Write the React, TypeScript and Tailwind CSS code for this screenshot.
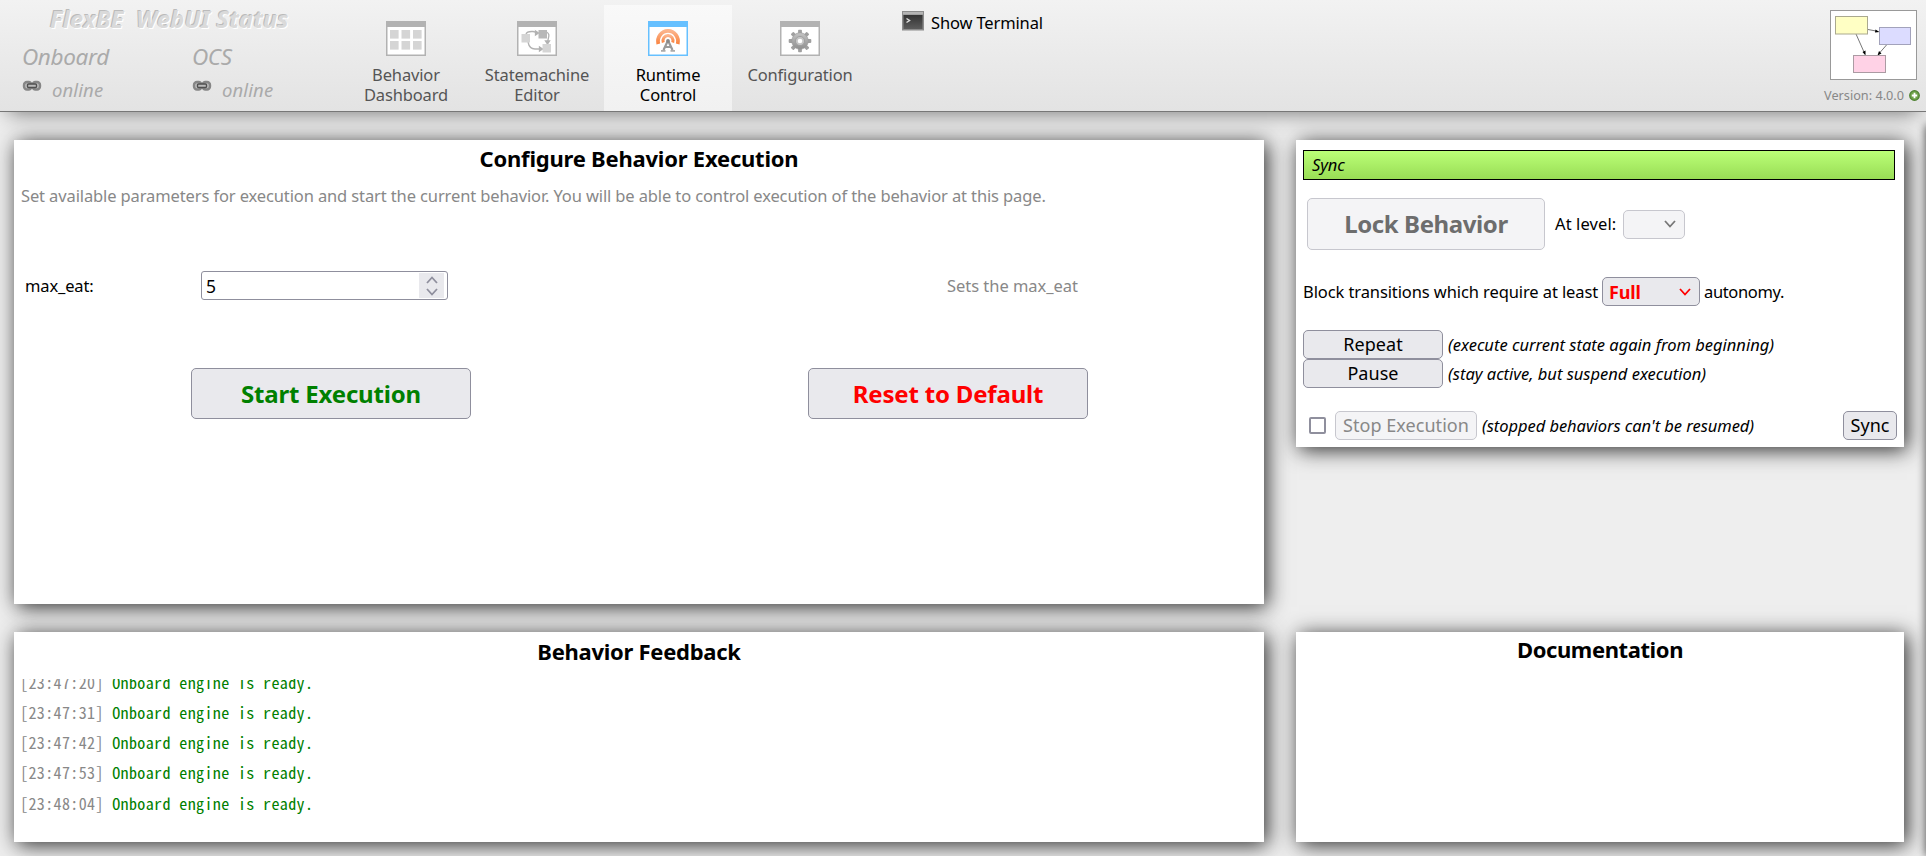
import { ReactNode } from "react";

const TEXT = "font-['Noto_Sans',sans-serif]";

function Chevron({ className = "" }: { className?: string }) {
  return (
    <svg width="12" height="8" viewBox="0 0 12 8" fill="none" stroke="currentColor" strokeWidth="1.8" className={className}>
      <path d="M1 1l5 5.500L11 1" />
    </svg>
  );
}

function WindowIcon({ color, children }: { color: string; children: ReactNode }) {
  return (
    <svg width="40" height="35" viewBox="0 0 40 35">
      <rect x="0.75" y="0.75" width="38.5" height="33.5" fill="#fff" stroke={color} strokeWidth="1.5" />
      <rect width="40" height="6" fill={color} />
      {children}
    </svg>
  );
}

function DashboardIcon() {
  return (
    <WindowIcon color="#b2b2b2">
      {[9, 20].map((y) => [4, 15.5, 27].map((x) => <rect key={`${x}-${y}`} x={x} y={y} width="8.6" height="8.6" fill="#d5d5d5" />))}
    </WindowIcon>
  );
}

function EditorIcon() {
  return (
    <WindowIcon color="#b2b2b2">
      <g fill="none" stroke="#b2b2b2" strokeWidth="1.3">
        <path d="M9 13c1-3 4-2.500 7-2.500c2 0 3 1.500 5 1.500M29.500 11c4 2 2 5 1 10M11 21c1 5 3 7 7 7h8" />
        <path d="M18.500 10v4l3-2zM28.500 20h4l-2 3zM22.500 26v4l3-2z" fill="#b2b2b2" />
      </g>
      <rect x="4.500" y="13" width="8.500" height="8.500" fill="#d5d5d5" />
      <rect x="21.500" y="9" width="8.500" height="8.500" fill="#b8b8b8" />
      <rect x="25.500" y="23" width="8.500" height="8.500" fill="#d5d5d5" />
    </WindowIcon>
  );
}

function RuntimeIcon() {
  return (
    <WindowIcon color="#66c0ff">
      <defs>
        <linearGradient id="wave" x1="0" y1="0" x2="0" y2="1">
          <stop offset="0" stopColor="#fbb48c" />
          <stop offset="1" stopColor="#fa8440" />
        </linearGradient>
      </defs>
      <g fill="none" stroke="url(#wave)">
        <path d="M10.300 23A10 10.500 0 1 1 29.700 23" strokeWidth="3.800" />
        <path d="M15.300 21.500A5 5.300 0 1 1 24.700 21.500" strokeWidth="3" />
      </g>
      <path d="M20 19.500l-4.500 9.500M20 19.500l4.500 9.500M17 26h6" stroke="#9a9a9a" strokeWidth="2.200" fill="none" />
      <path d="M13 29.800h4.500M22.500 29.800h4.500" stroke="#aaa" strokeWidth="1.800" />
      <circle cx="20" cy="20" r="1.900" fill="#888" />
    </WindowIcon>
  );
}

function ConfigIcon() {
  return (
    <WindowIcon color="#b2b2b2">
      <defs>
        <linearGradient id="gear" x1="0" y1="0" x2="0" y2="1">
          <stop offset="0" stopColor="#c4c4c4" />
          <stop offset="1" stopColor="#8e8e8e" />
        </linearGradient>
      </defs>
      <g transform="translate(20 20)">
        {[0, 45, 90, 135, 180, 225, 270, 315].map((a) => (
          <rect key={a} x="-1.900" y="-11.300" width="3.800" height="5" rx="0.800" fill="#a0a0a0" transform={`rotate(${a})`} />
        ))}
        <circle r="8.300" fill="url(#gear)" stroke="#999" strokeWidth="0.600" />
        <circle r="4.600" fill="#c4c4c4" stroke="#999" strokeWidth="0.800" />
        <circle r="2.300" fill="#fff" />
      </g>
    </WindowIcon>
  );
}

function LinkIcon() {
  return (
    <svg width="20" height="12" viewBox="0 0 20 12" fill="none">
      <rect x="2" y="2" width="7.500" height="7.500" rx="3" fill="#bbb" stroke="#868686" strokeWidth="2.400" />
      <rect x="10.500" y="2" width="7.500" height="7.500" rx="3" fill="#bbb" stroke="#868686" strokeWidth="2.400" />
      <rect x="5.500" y="4" width="9" height="3.500" rx="1" fill="#bbb" stroke="#505050" strokeWidth="1.400" />
    </svg>
  );
}

function TerminalIcon() {
  return (
    <svg width="22" height="20" viewBox="0 0 22 20">
      <defs>
        <linearGradient id="term" x1="0" y1="0" x2="0" y2="1">
          <stop offset="0" stopColor="#333" />
          <stop offset="1" stopColor="#5c5c5c" />
        </linearGradient>
      </defs>
      <rect width="22" height="19.500" fill="#8c8c8c" />
      <rect x="1" y="1" width="20" height="2.500" fill="#b4b4b4" />
      <rect x="1.500" y="4" width="19" height="14" fill="url(#term)" />
      <path d="M4.500 7.500L7.500 9.500L4.500 11.500" stroke="#ddd" strokeWidth="1.500" fill="none" />
    </svg>
  );
}

function LogoDiagram() {
  return (
    <svg width="87" height="70" viewBox="0 0 87 70">
      <rect x="0.500" y="0.500" width="86" height="69" fill="#fff" stroke="#999" />
      <g stroke="#777" strokeWidth="1">
        <path d="M38 19.500L46 21M26 24l8 18M56.500 35l-7 8" />
      </g>
      <path d="M45.500 19.500l4 2.500-4.500 0.500zM35.500 45.500l-3-3.500 3-1.500zM47.500 45.500l1.500-4.500 2.500 2.500z" fill="#000" />
      <rect x="5.500" y="6.500" width="32" height="17.500" fill="#ffffc4" stroke="#aaa98f" />
      <rect x="49.500" y="17.500" width="31" height="17" fill="#dcdcff" stroke="#a2a2bb" />
      <rect x="23.500" y="45.500" width="32" height="17" fill="#ffd2e6" stroke="#ab9ba3" />
    </svg>
  );
}

function PlusBadge() {
  return (
    <svg width="11" height="11" viewBox="0 0 11 11">
      <circle cx="5.500" cy="5.500" r="4.800" fill="#6fa24a" stroke="#4d8030" strokeWidth="1.200" />
      <path d="M5.500 2.800v5.400M2.800 5.500h5.400" stroke="#fff" strokeWidth="1.800" />
    </svg>
  );
}

function Tab({ icon, lines, width, active = false }: { icon: ReactNode; lines: string[]; width: string; active?: boolean }) {
  return (
    <div
      className={`${width} flex flex-col items-center pt-[16px] text-center ${
        active ? "bg-linear-to-b from-[#f9f9f9] to-[#f1f1f1] text-black" : "text-[#555]"
      }`}
    >
      {icon}
      <div className="mt-[9px]">
        {lines.map((line) => (
          <div key={line}>{line}</div>
        ))}
      </div>
    </div>
  );
}

function Status({ name, width }: { name: string; width: string }) {
  return (
    <div className={`${width} italic text-[#aaa]`}>
      <div className="text-[22.500px] leading-[26px] tracking-[-0.35px]">{name}</div>
      <div className="mt-[6px] flex items-start">
        <div className="pt-[4px]">
          <LinkIcon />
        </div>
        <div className="ml-[10px] mt-[2px] text-[18.500px] leading-[24px] tracking-[0.1px]">online</div>
      </div>
    </div>
  );
}

function Panel({ className, children }: { className: string; children?: ReactNode }) {
  return <section className={`bg-white shadow-[3px_3px_20px_#2c2c2c] ${className}`}>{children}</section>;
}

const BUTTON = "flex items-center justify-center border rounded-[5px]";
const ENABLED = "border-[#8f8f9d] bg-[#e9e9ed]";
const DISABLED = "border-[#c7c7ce] bg-[#f4f4f6]";
const NOTE = "ml-[5px] tracking-[0px]";
const SMALL = "h-[29px] text-[18px] tracking-[0.05px] leading-[24px] pb-[1px]";

const logTimes = ["23:47:20", "23:47:31", "23:47:42", "23:47:53", "23:48:04"];

export default function App() {
  return (
    <div className={`${TEXT} relative flex h-[856px] w-[1926px] flex-col overflow-hidden bg-[#eee] text-[16.500px] leading-[20px] tracking-[-0.14px] text-black`}>
      <header className="flex h-[112px] shrink-0 border-b border-[#777] bg-linear-to-b from-[#f2f2f2] to-[#e3e3e3] shadow-[0_9px_20px_-8px_#777]">
        <div className="w-[345px] pl-[22px] pt-[5px]">
          <div className="whitespace-pre pl-[28px] text-[23.500px] font-bold italic leading-[28px] tracking-[0.2px] text-[#dadada] [text-shadow:1px_1px_0_#fff,-1px_-1px_0_#bbb]">
            FlexBE  WebUI Status
          </div>
          <div className="mt-[11px] flex">
            <Status name="Onboard" width="w-[170px]" />
            <Status name="OCS" width="w-[120px]" />
          </div>
        </div>
        <nav className="flex pt-[5px]">
          <Tab width="w-[122px]" icon={<DashboardIcon />} lines={["Behavior", "Dashboard"]} />
          <Tab width="ml-[3px] w-[134px]" icon={<EditorIcon />} lines={["Statemachine", "Editor"]} />
          <Tab width="w-[128px]" icon={<RuntimeIcon />} lines={["Runtime", "Control"]} active />
          <Tab width="w-[136px]" icon={<ConfigIcon />} lines={["Configuration"]} />
        </nav>
        <div className="ml-[34px] mt-[11px] flex h-[24px] items-start gap-[7px]">
          <TerminalIcon />
          <span className="mt-[2px]">Show Terminal</span>
        </div>
        <div className="ml-auto mr-[6px] mt-[10px] flex flex-col items-end">
          <div className="mr-[3px]">
            <LogoDiagram />
          </div>
          <div className="mt-[5px] flex items-center gap-[5px] text-[12.700px] tracking-[0px] text-[#888]">
            Version: 4.0.0
            <PlusBadge />
          </div>
        </div>
      </header>

      <main className="flex px-[14px] pt-[28px]">
        <div className="flex w-[1250px] flex-col gap-[28px]">
          <Panel className="h-[464px]">
            <h2 className="pt-[4px] text-center text-[22px] font-bold leading-[28px] tracking-[-0.22px]">Configure Behavior Execution</h2>
            <p className="mt-[14px] pl-[7px] tracking-[-0.122px] text-[#888]">
              Set available parameters for execution and start the current behavior. You will be able to control execution of the behavior at this page.
            </p>
            <div className="mt-[65px] flex h-[29px] items-center pl-[11px]">
              <label className="w-[176px]">max_eat:</label>
              <div className="flex h-[29px] w-[247px] items-center justify-between rounded-[3px] border border-[#8f8f9d] pl-[4px] pr-[3px]">
                <span className="text-[17.500px]">5</span>
                <span className="flex h-[25px] w-[25px] flex-col items-center justify-center gap-[4px] bg-[#e9e9ed] text-[#8f8f9d]">
                  <Chevron className="rotate-180" />
                  <Chevron />
                </span>
              </div>
              <span className="ml-[499px] tracking-[-0.04px] text-[#888]">Sets the max_eat</span>
            </div>
            <div className="mt-[68px] flex gap-[337px] pl-[177px] text-[24px] font-bold tracking-[-0.18px]">
              <button className={`${BUTTON} ${ENABLED} h-[51px] w-[280px] text-[#008000]`}>Start Execution</button>
              <button className={`${BUTTON} ${ENABLED} h-[51px] w-[280px] text-[#f00]`}>Reset to Default</button>
            </div>
          </Panel>
          <Panel className="h-[210px]">
            <h2 className="pt-[5px] text-center text-[22px] font-bold leading-[28px] tracking-[-0.27px]">Behavior Feedback</h2>
            <div className="mt-[14px] flex h-[145px] flex-col justify-end overflow-hidden pb-[6px] pl-[6px] font-['Noto_Sans_Mono_CJK_JP','Noto_Sans_CJK_JP','Liberation_Mono',monospace] text-[16px] leading-[30px] tracking-[0.38px] text-[#008000]">
              {logTimes.map((time) => (
                <div key={time} className="h-[30.300px] shrink-0 whitespace-pre">
                  <span className="text-[#888]">[{time}]</span> Onboard engine is ready.
                </div>
              ))}
            </div>
          </Panel>
        </div>

        <div className="ml-[32px] flex w-[608px] flex-col justify-between">
          <Panel className="h-[307px] px-[7px] pt-[10px]">
            <div className="flex h-[30px] w-[592px] items-center border border-black bg-linear-to-b from-[#bf7] to-[#9d5] pl-[8px] italic">Sync</div>
            <div className="mt-[18px] flex items-center pl-[4px]">
              <button className={`${BUTTON} ${DISABLED} h-[52px] w-[238px] text-[24px] font-bold tracking-[-0.400px] text-[#6d6d6d]`}>Lock Behavior</button>
              <span className="ml-[10px] w-[62px] whitespace-nowrap tracking-[0.1px]">At level:</span>
              <span className={`${BUTTON} ${DISABLED} ml-[6px] h-[29px] w-[62px] justify-end! pr-[8px] text-[#777]`}>
                <Chevron />
              </span>
            </div>
            <div className="mt-[27px] flex items-center whitespace-pre">
              <span className="w-[295px] tracking-[-0.1px]">Block transitions which require at least</span>
              <span className={`${BUTTON} ${ENABLED} ml-[4px] mr-[4px] h-[29px] w-[98px] justify-between! pl-[6px] pr-[8px] text-[18px] font-bold text-[#f00]`}>
                Full
                <Chevron />
              </span>
              <span className="tracking-[-0.35px]">autonomy.</span>
            </div>
            <div className="mt-[24px] flex items-center">
              <button className={`${BUTTON} ${ENABLED} ${SMALL} w-[140px]`}>Repeat</button>
              <i className={NOTE}>(execute current state again from beginning)</i>
            </div>
            <div className="flex items-center">
              <button className={`${BUTTON} ${ENABLED} ${SMALL} w-[140px]`}>Pause</button>
              <i className={NOTE}>(stay active, but suspend execution)</i>
            </div>
            <div className="mt-[23px] flex items-center pl-[6px]">
              <span className="h-[17px] w-[17px] rounded-[2px] border-2 border-[#8f8f9d] bg-white" />
              <button className={`${BUTTON} ${DISABLED} ${SMALL} ml-[9px] w-[142px] text-[#888]`}>Stop Execution</button>
              <i className="ml-[5px] tracking-[-0.05px]">(stopped behaviors can't be resumed)</i>
              <button className={`${BUTTON} ${ENABLED} ${SMALL} ml-auto w-[54px]`}>Sync</button>
            </div>
          </Panel>
          <Panel className="h-[210px]">
            <h2 className="pt-[3px] text-center text-[22px] font-bold leading-[28px] tracking-[-0.4px]">Documentation</h2>
          </Panel>
        </div>
      </main>

      <aside className="absolute -right-[10px] bottom-0 top-[125px] w-[10px] bg-white shadow-[0_0_10px_#444]" />
    </div>
  );
}
